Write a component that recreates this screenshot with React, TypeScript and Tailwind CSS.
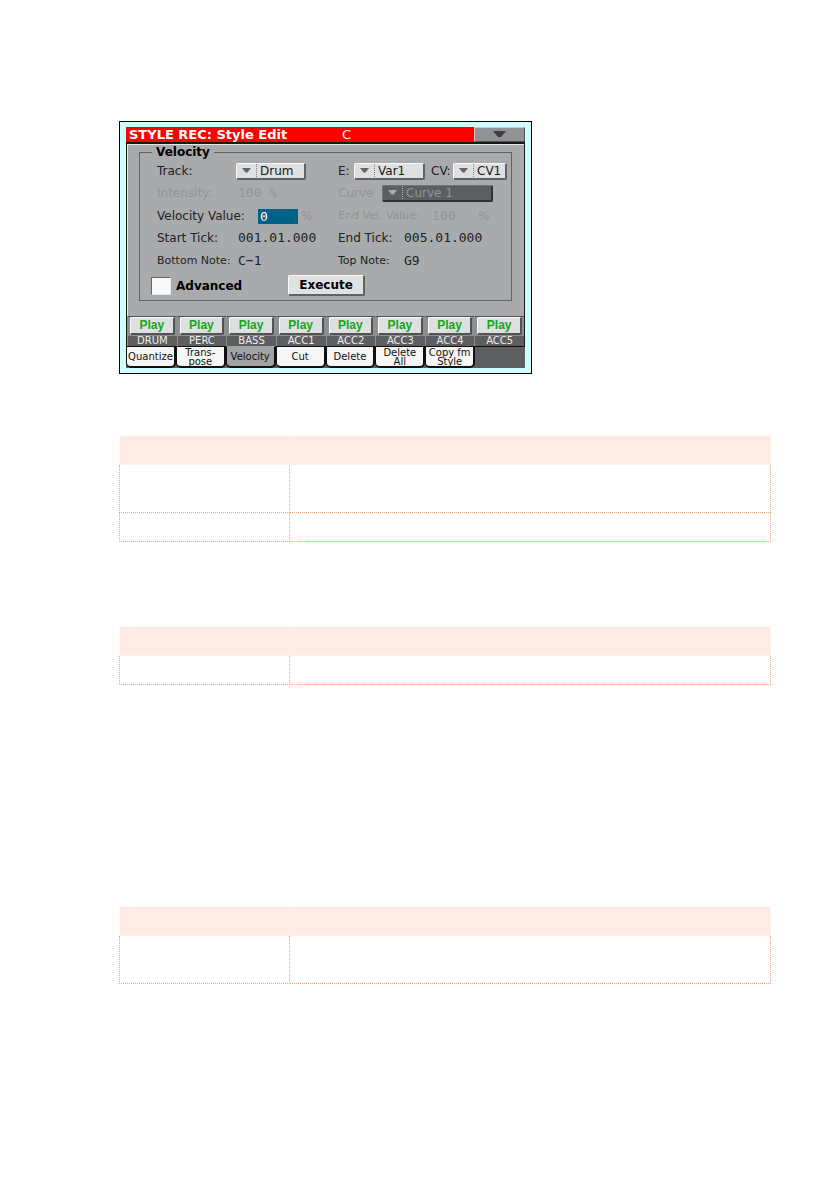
import React, { useState } from 'react';
import clsx from 'clsx';

const tracks = ['DRUM', 'PERC', 'BASS', 'ACC1', 'ACC2', 'ACC3', 'ACC4', 'ACC5'];

const tabs = [
  ['Quantize'],
  ['Trans-', 'pose'],
  ['Velocity'],
  ['Cut'],
  ['Delete'],
  ['Delete', 'All'],
  ['Copy fm', 'Style'],
];

interface PickerProps {
  id: string;
  value: string;
  className: string;
  disabled?: boolean;
}

const Picker: React.FC<PickerProps> = ({ id, value, className, disabled }) => (
  <div
    className={clsx(
      'flex h-[17px] items-center rounded-[2px] border border-r-2 border-b-2',
      disabled
        ? 'border-[#707274] border-r-[#303234] border-b-[#303234] bg-[#5c5e60] text-[#929496]'
        : 'border-[#f8f8f8] border-r-[#606264] border-b-[#606264] bg-[#dedfe0] text-[#181818]',
      className
    )}
  >
    <svg width="9" height="5" viewBox="0 0 9 5" className="mx-[5px] shrink-0">
      <path d="M0 0H9L5.500 4.500H3.500Z" fill={disabled ? '#a8aaac' : '#626466'} />
    </svg>
    <span className={clsx('h-[13px] w-0 border-l border-dotted', disabled ? 'border-[#b0b2b4]' : 'border-[#808284]')} />
    <select id={id} disabled={disabled} defaultValue={value} className="h-[14px] min-w-0 flex-1 appearance-none bg-transparent pl-[3px] leading-[14px] opacity-100 outline-none">
      <option>{value}</option>
    </select>
  </div>
);

const Screen = () => {
  const [tab, setTab] = useState(2);
  const [velocity, setVelocity] = useState('0');

  return (
    <section className="w-full max-w-[413px] border border-black bg-[#ccffff] px-[6px] py-[5px] font-['DejaVu_Sans',sans-serif] text-[12px] leading-[14px] text-[#202224]">
      {/* Title bar */}
      <header className="flex h-[15px] bg-[#ff0000] text-[13px] leading-[15px] text-white">
        <h1 className="w-[216px] pl-[3px] font-bold whitespace-nowrap">STYLE REC: Style Edit</h1>
        <span className="flex-1">C</span>
        <button aria-label="Page menu" className="flex w-[51px] items-center justify-center border border-t-[#c8cacc] border-r-[#505254] border-b-[#505254] border-l-[#c8cacc] bg-[#909294]">
          <svg width="13" height="7" viewBox="0 0 13 7">
            <path d="M0 0H13L8 6H5Z" fill="#3c3e40" />
          </svg>
        </button>
      </header>

      <div className="border-x border-t-2 border-[#181818] bg-[#a8aaac]">
        <div className="h-[172px] border-t border-l border-[#e4e6e8] px-[11px]">
          <fieldset className="mr-px h-[156px] min-w-0 border border-[#606264] pt-px pl-[17px]">
            <legend className="-ml-[5px] h-[14px] px-1 font-bold text-black">Velocity</legend>

            <div className="flex h-[22px] items-center">
              <label htmlFor="track" className="w-[79px]">Track:</label>
              <Picker id="track" value="Drum" className="w-[70px]" />
              <label htmlFor="element" className="ml-[32px] w-[16px]">E:</label>
              <Picker id="element" value="Var1" className="w-[71px]" />
              <label htmlFor="cv" className="ml-[6px] w-[22px]">CV:</label>
              <Picker id="cv" value="CV1" className="w-[54px]" />
            </div>
            <div className="flex h-[22px] items-center text-[#939597]">
              <span className="w-[81px]">Intensity:</span>
              <span className="w-[100px] font-['DejaVu_Sans_Mono',monospace] text-[13px]">100 %</span>
              <label htmlFor="curve" className="w-[44px]">Curve</label>
              <Picker id="curve" value="Curve 1" className="w-[111px]" disabled />
            </div>
            <div className="flex h-[24px] items-center">
              <label htmlFor="velocity" className="w-[101px]">Velocity Value:</label>
              <input id="velocity" value={velocity} onChange={(e) => setVelocity(e.target.value)} className="h-[15px] w-[40px] bg-[#006088] px-[2px] font-['DejaVu_Sans_Mono',monospace] text-[13px] leading-[15px] text-white outline-none" />
              <span className="w-[40px] pl-[3px] text-[#939597]">%</span>
              <span className="w-[94px] text-[11px] whitespace-nowrap text-[#939597]">End Vel. Value:</span>
              <span className="w-[46px] font-['DejaVu_Sans_Mono',monospace] text-[13px] text-[#939597]">100</span>
              <span className="text-[#939597]">%</span>
            </div>
            <div className="flex h-[20px] items-center">
              <span className="w-[81px]">Start Tick:</span>
              <span className="w-[100px] font-['DejaVu_Sans_Mono',monospace] text-[13px]">001.01.000</span>
              <span className="w-[66px]">End Tick:</span>
              <span className="font-['DejaVu_Sans_Mono',monospace] text-[13px]">005.01.000</span>
            </div>
            <div className="flex h-[26px] items-center">
              <span className="w-[81px] text-[11px] whitespace-nowrap">Bottom Note:</span>
              <span className="w-[100px] font-['DejaVu_Sans_Mono',monospace] text-[13px]">C−1</span>
              <span className="w-[66px] text-[11px]">Top Note:</span>
              <span className="font-['DejaVu_Sans_Mono',monospace] text-[13px]">G9</span>
            </div>
            <div className="-ml-[6px] flex h-[23px] items-center font-bold text-black">
              <input id="advanced" type="checkbox" className="h-[18px] w-[20px] appearance-none border border-t-[#606264] border-r-[#e8e8e8] border-b-[#e8e8e8] border-l-[#606264] bg-[#f8f8f8] checked:bg-[#006088]" />
              <label htmlFor="advanced" className="w-[117px] pl-[5px]">Advanced</label>
              <button className="h-[21px] w-[77px] rounded-[2px] border border-r-2 border-b-2 border-[#fafafa] border-r-[#606264] border-b-[#606264] bg-[#e0e1e2] leading-[16px]">Execute</button>
            </div>
          </fieldset>
        </div>

        <div className="grid grid-cols-8 bg-[#5c5e60]">
          {tracks.map((track) => (
            <div key={track} className="border-l border-[#8c8e90] text-center">
              <div className="h-[20px] border-t border-[#505254] bg-[#8c8e90] px-[2px]">
                <button className="block h-[18px] w-full rounded-[2px] border border-r-2 border-b-2 border-[#fafafa] border-r-[#505254] border-b-[#505254] bg-[#dedfe0] font-['Liberation_Sans',sans-serif] font-bold leading-[15px] text-[#12a818]">Play</button>
              </div>
              <div className="h-[10px] text-[10px] leading-[10px] text-[#eeeeee]">{track}</div>
            </div>
          ))}
        </div>
      </div>

      <nav className="grid h-[22px] grid-cols-8 bg-[#5c5e60]">
        {tabs.map((lines, i) => (
          <button
            key={i}
            onClick={() => setTab(i)}
            className={clsx(
              'flex flex-col items-center justify-center rounded-b-[5px] border-t border-r-2 border-b-2 border-l border-[#101010] text-[10px] leading-[9px] whitespace-nowrap text-[#101010]',
              tab === i ? 'border-t-[#a0a2a4] bg-[#a0a2a4]' : 'bg-[#f6f6f6]'
            )}
          >
            {lines.map((line) => (
              <span key={line}>{line}</span>
            ))}
          </button>
        ))}
        <span className="border-t border-[#101010]" />
      </nav>
    </section>
  );
};

// Two column table, one entry of `rows` per body row
const ParameterTable: React.FC<{ rows: string[]; className: string }> = ({ rows, className }) => (
  <table className={clsx('w-full table-fixed border-collapse', className)}>
    <thead>
      <tr className="h-[29px] bg-[#feece4]">
        <th className="w-[170px] border border-dotted border-[#fff6f2]" />
        <th className="border border-dotted border-[#fff6f2]" />
      </tr>
    </thead>
    <tbody>
      {rows.map((height, i) => (
        <tr key={i} className={height}>
          <td className="border border-dotted border-[#f4a47c]" />
          <td className="border border-dotted border-[#f4a47c]" />
        </tr>
      ))}
    </tbody>
  </table>
);

export default function App() {
  return (
    <main className="min-h-screen bg-white pt-[121px] pr-[68px] pl-[119px]">
      <Screen />
      <ParameterTable rows={['h-[48px]', 'h-[29px]']} className="mt-[61px]" />
      <ParameterTable rows={['h-[29px]']} className="mt-[84px]" />
      <ParameterTable rows={['h-[48px]']} className="mt-[221px]" />
    </main>
  );
}
